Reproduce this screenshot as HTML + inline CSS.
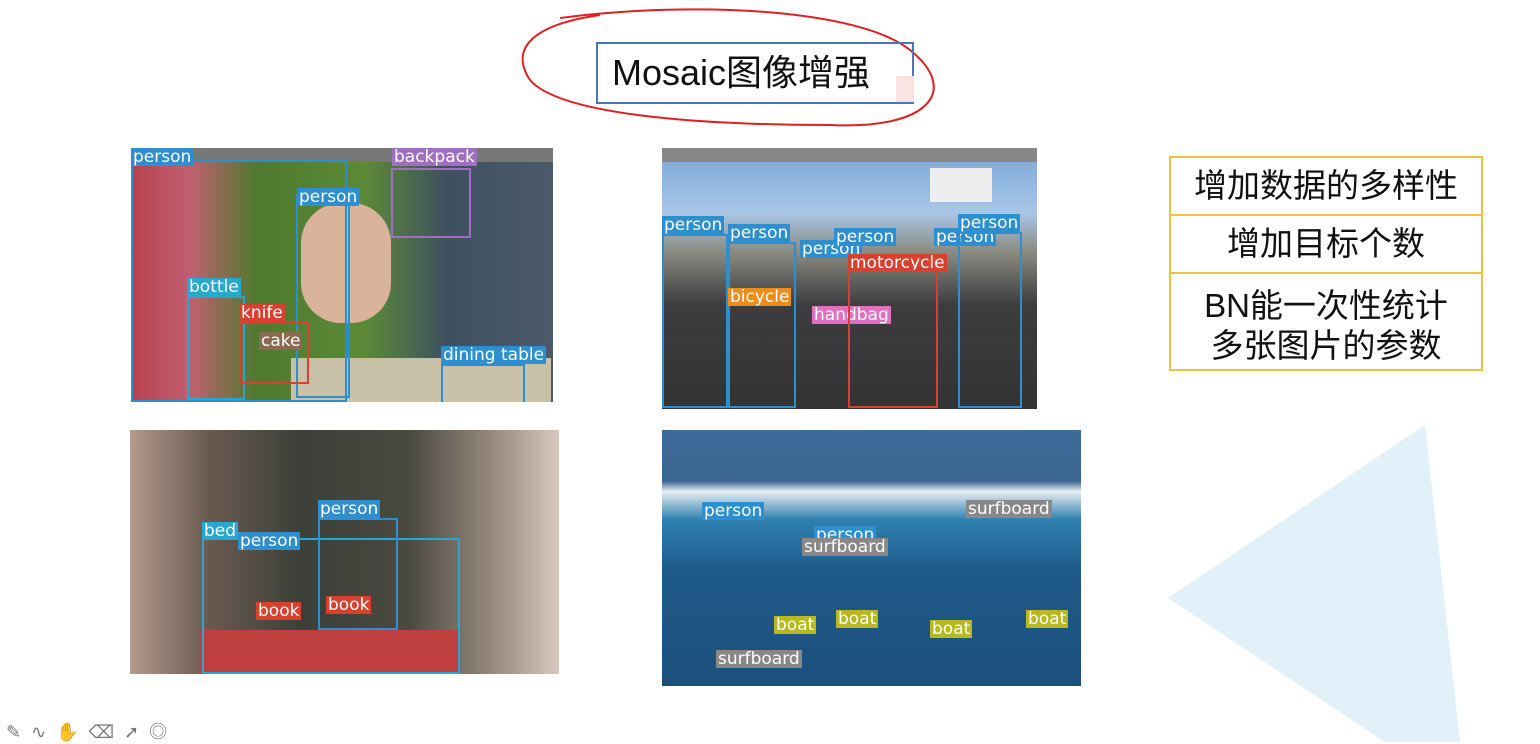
<!DOCTYPE html>
<html><head><meta charset="utf-8"><style>
body{margin:0;width:1540px;height:742px;background:#fff;position:relative;overflow:hidden;font-family:"Liberation Sans","Noto Sans CJK SC",sans-serif}
.a{position:absolute}
.img{position:absolute;overflow:hidden}
.b{position:absolute;border:2px solid}
.l{position:absolute;color:#fff;font-size:17px;line-height:18px;padding:0 2px;font-family:"DejaVu Sans",sans-serif}
</style></head><body>
<svg class="a" style="left:0;top:0" width="1540" height="742">
<polygon points="1425,425 1168,598 1385,742 1460,742" fill="#e2f0fa"/>
<path d="M560,18 C700,0 860,10 910,50 C960,90 930,130 830,125 C700,125 560,115 530,80 C510,50 530,25 600,15" fill="none" stroke="#e02020" stroke-width="2"/>
</svg>
<div class="a" style="left:596px;top:42px;width:318px;height:62px;border:2px solid #4a76b8;box-sizing:border-box;font-size:36px;line-height:58px;padding-left:14px;color:#111">Mosaic图像增强</div>
<div class="a" style="left:896px;top:76px;width:18px;height:26px;background:#fbe3e3"></div>

<div class="a" style="left:1169px;top:156px;width:314px;height:215px;border:2px solid #f0c040;box-sizing:border-box;font-size:33px;color:#111;text-align:center">
<div style="height:56px;line-height:56px;border-bottom:2px solid #f0c040">增加数据的多样性</div>
<div style="height:56px;line-height:56px;border-bottom:2px solid #f0c040">增加目标个数</div>
<div style="line-height:40px;padding-top:12px">BN能一次性统计<br>多张图片的参数</div>
</div>

<!-- TL -->
<div class="img" style="left:131px;top:148px;width:422px;height:254px;background:linear-gradient(90deg,#b8424e 0,#c06070 14%,#4d7a2e 30%,#5d8a36 55%,#3e5060 75%,#4b5a6a 100%)">
<div class="a" style="left:0;top:0;width:422px;height:14px;background:#777"></div>
<div class="a" style="left:170px;top:55px;width:90px;height:120px;background:#d9b39a;border-radius:40px"></div>
<div class="a" style="left:160px;top:210px;width:260px;height:44px;background:#c9c0a8"></div>
<div class="b" style="left:0;top:12px;width:212px;height:238px;border-color:#2d8ed0"></div>
<div class="l" style="left:0;top:0;background:#2d8ed0">person</div>
<div class="b" style="left:165px;top:46px;width:50px;height:200px;border-color:#2d8ed0"></div>
<div class="l" style="left:166px;top:40px;background:#2d8ed0">person</div>
<div class="b" style="left:260px;top:20px;width:76px;height:66px;border-color:#a070c0"></div>
<div class="l" style="left:261px;top:0;background:#a070c0">backpack</div>
<div class="l" style="left:56px;top:130px;background:#27a8cf">bottle</div>
<div class="b" style="left:56px;top:148px;width:54px;height:100px;border-color:#27a8cf"></div>
<div class="l" style="left:108px;top:156px;background:#d84030">knife</div>
<div class="b" style="left:108px;top:174px;width:66px;height:58px;border-color:#d84030"></div>
<div class="l" style="left:128px;top:184px;background:#8a6a50">cake</div>
<div class="l" style="left:310px;top:198px;background:#2d8ed0">dining table</div>
<div class="b" style="left:310px;top:216px;width:80px;height:36px;border-color:#2d8ed0"></div>
</div>
<!-- TR -->
<div class="img" style="left:662px;top:148px;width:375px;height:261px;background:linear-gradient(180deg,#7aa7d8 0,#a9c6e6 25%,#8a8a80 40%,#3d3d40 60%,#333 100%)">
<div class="a" style="left:0;top:0;width:375px;height:14px;background:#888"></div>
<div class="a" style="left:268px;top:20px;width:62px;height:34px;background:#eee"></div>
<div class="l" style="left:0;top:68px;background:#2d8ed0">person</div>
<div class="b" style="left:0;top:86px;width:62px;height:170px;border-color:#2d8ed0"></div>
<div class="l" style="left:66px;top:76px;background:#2d8ed0">person</div>
<div class="b" style="left:66px;top:94px;width:64px;height:162px;border-color:#2d8ed0"></div>
<div class="l" style="left:138px;top:92px;background:#2d8ed0">person</div>
<div class="l" style="left:172px;top:80px;background:#2d8ed0">person</div>
<div class="l" style="left:186px;top:106px;background:#d84030">motorcycle</div>
<div class="l" style="left:66px;top:140px;background:#f08c1c">bicycle</div>
<div class="l" style="left:150px;top:158px;background:#e070c0">handbag</div>
<div class="b" style="left:186px;top:122px;width:86px;height:134px;border-color:#d84030"></div>
<div class="l" style="left:272px;top:80px;background:#2d8ed0">person</div>
<div class="l" style="left:296px;top:66px;background:#2d8ed0">person</div>
<div class="b" style="left:296px;top:84px;width:60px;height:172px;border-color:#2d8ed0"></div>
</div>
<!-- BL -->
<div class="img" style="left:130px;top:430px;width:429px;height:244px;background:linear-gradient(90deg,#b59b8e 0,#6a5a50 18%,#3c4038 40%,#4a4a40 65%,#9a8a80 85%,#d8c8c0 100%)">
<div class="a" style="left:70px;top:200px;width:260px;height:44px;background:#c04040"></div>
<div class="l" style="left:72px;top:92px;background:#27a8cf">bed</div>
<div class="b" style="left:72px;top:108px;width:254px;height:132px;border-color:#27a8cf"></div>
<div class="l" style="left:108px;top:102px;background:#2d8ed0">person</div>
<div class="l" style="left:188px;top:70px;background:#2d8ed0">person</div>
<div class="b" style="left:188px;top:88px;width:76px;height:108px;border-color:#2d8ed0"></div>
<div class="l" style="left:126px;top:172px;background:#d84030">book</div>
<div class="l" style="left:196px;top:166px;background:#d84030">book</div>
</div>
<!-- BR -->
<div class="img" style="left:662px;top:430px;width:419px;height:256px;background:linear-gradient(180deg,#3d6c9a 0,#3a6590 20%,#e8eef2 24%,#2f80b0 35%,#1e5a8a 55%,#1d4f7c 100%)">
<div class="l" style="left:40px;top:72px;background:#2d8ed0">person</div>
<div class="l" style="left:152px;top:96px;background:#2d8ed0">person</div>
<div class="l" style="left:140px;top:108px;background:#888">surfboard</div>
<div class="l" style="left:304px;top:70px;background:#888">surfboard</div>
<div class="l" style="left:112px;top:186px;background:#b8b820">boat</div>
<div class="l" style="left:174px;top:180px;background:#b8b820">boat</div>
<div class="l" style="left:268px;top:190px;background:#b8b820">boat</div>
<div class="l" style="left:364px;top:180px;background:#b8b820">boat</div>
<div class="l" style="left:54px;top:220px;background:#888">surfboard</div>
</div>
<div class="a" style="left:6px;top:718px;font-size:18px;color:#777;letter-spacing:10px">✎∿✋⌫➚◎</div>
</body></html>
